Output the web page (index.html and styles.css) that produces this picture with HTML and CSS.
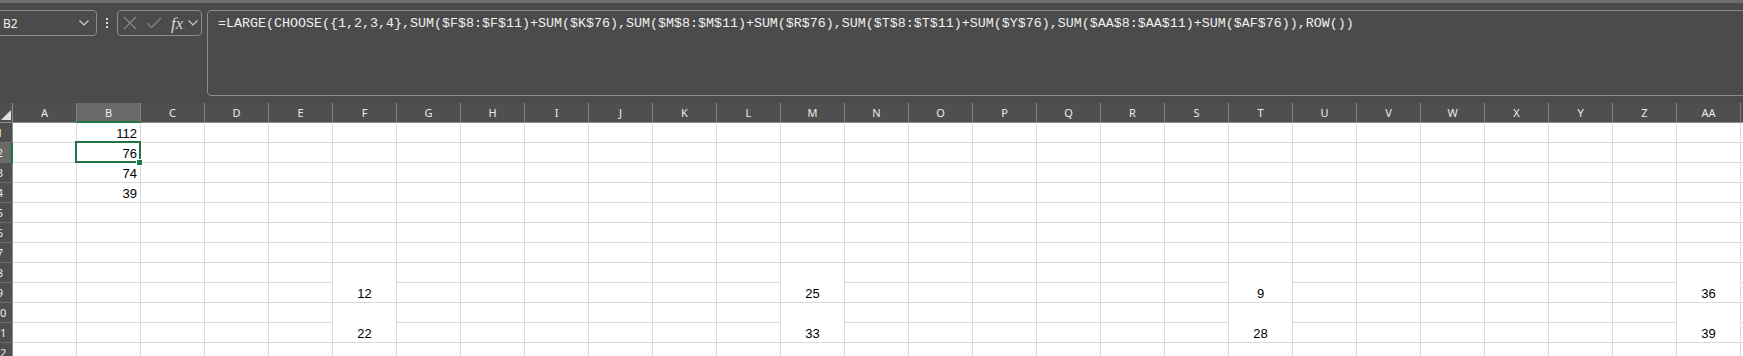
FILE: index.html
```html
<!DOCTYPE html>
<html>
<head>
<meta charset="utf-8">
<link rel="stylesheet" href="styles.css">
</head>
<body>
<div class="app">
  <div class="topbar">
    <div class="namebox">
      <span class="nb-text">B2</span>
      <svg class="chev" width="10" height="6" viewBox="0 0 10 6"><polyline points="0.5,0.5 5,5 9.5,0.5" fill="none" stroke="#d0d0d0" stroke-width="1.2"/></svg>
    </div>
    <div class="dots"><i></i><i></i><i></i></div>
    <div class="fxbox">
      <svg class="ico" width="14" height="14" viewBox="0 0 14 14"><path d="M1 1 L13 13 M13 1 L1 13" stroke="#8a8a8a" stroke-width="1.1" fill="none"/></svg>
      <svg class="ico" width="16" height="12" viewBox="0 0 16 12"><polyline points="1,6 5.5,10.5 15,1" fill="none" stroke="#8a8a8a" stroke-width="1.1"/></svg>
      <span class="fx">fx</span>
      <svg class="chev2" width="10" height="6" viewBox="0 0 10 6"><polyline points="0.5,0.5 5,5 9.5,0.5" fill="none" stroke="#c8c8c8" stroke-width="1.2"/></svg>
    </div>
    <div class="formula">=LARGE(CHOOSE({1,2,3,4},SUM($F$8:$F$11)+SUM($K$76),SUM($M$8:$M$11)+SUM($R$76),SUM($T$8:$T$11)+SUM($Y$76),SUM($AA$8:$AA$11)+SUM($AF$76)),ROW())</div>
  </div>
  <div class="grid">
    <span class="corner"><svg width="10" height="10" viewBox="0 0 10 10"><polygon points="10,0 10,10 0,10" fill="#e0e0e0"/></svg></span>
    <span class="h">A</span><span class="h hs">B</span><span class="h">C</span><span class="h">D</span><span class="h">E</span><span class="h">F</span><span class="h">G</span><span class="h">H</span><span class="h">I</span><span class="h">J</span><span class="h">K</span><span class="h">L</span><span class="h">M</span><span class="h">N</span><span class="h">O</span><span class="h">P</span><span class="h">Q</span><span class="h">R</span><span class="h">S</span><span class="h">T</span><span class="h">U</span><span class="h">V</span><span class="h">W</span><span class="h">X</span><span class="h">Y</span><span class="h">Z</span><span class="h">AA</span><span class="h">AB</span>

    <span class="r"><em>1</em></span><span></span><span class="n">112</span><span></span><span></span><span></span><span></span><span></span><span></span><span></span><span></span><span></span><span></span><span></span><span></span><span></span><span></span><span></span><span></span><span></span><span></span><span></span><span></span><span></span><span></span><span></span><span></span><span></span><span></span>

    <span class="r rs"><em>2</em></span><span></span><span class="n sel">76</span><span></span><span></span><span></span><span></span><span></span><span></span><span></span><span></span><span></span><span></span><span></span><span></span><span></span><span></span><span></span><span></span><span></span><span></span><span></span><span></span><span></span><span></span><span></span><span></span><span></span><span></span>

    <span class="r"><em>3</em></span><span></span><span class="n">74</span><span></span><span></span><span></span><span></span><span></span><span></span><span></span><span></span><span></span><span></span><span></span><span></span><span></span><span></span><span></span><span></span><span></span><span></span><span></span><span></span><span></span><span></span><span></span><span></span><span></span><span></span>

    <span class="r"><em>4</em></span><span></span><span class="n">39</span><span></span><span></span><span></span><span></span><span></span><span></span><span></span><span></span><span></span><span></span><span></span><span></span><span></span><span></span><span></span><span></span><span></span><span></span><span></span><span></span><span></span><span></span><span></span><span></span><span></span><span></span>

    <span class="r"><em>5</em></span><span></span><span></span><span></span><span></span><span></span><span></span><span></span><span></span><span></span><span></span><span></span><span></span><span></span><span></span><span></span><span></span><span></span><span></span><span></span><span></span><span></span><span></span><span></span><span></span><span></span><span></span><span></span><span></span>

    <span class="r"><em>6</em></span><span></span><span></span><span></span><span></span><span></span><span></span><span></span><span></span><span></span><span></span><span></span><span></span><span></span><span></span><span></span><span></span><span></span><span></span><span></span><span></span><span></span><span></span><span></span><span></span><span></span><span></span><span></span><span></span>

    <span class="r"><em>7</em></span><span></span><span></span><span></span><span></span><span></span><span></span><span></span><span></span><span></span><span></span><span></span><span></span><span></span><span></span><span></span><span></span><span></span><span></span><span></span><span></span><span></span><span></span><span></span><span></span><span></span><span></span><span></span><span></span>

    <span class="r"><em>8</em></span><span></span><span></span><span></span><span></span><span></span><span class="m">12</span><span></span><span></span><span></span><span></span><span></span><span></span><span class="m">25</span><span></span><span></span><span></span><span></span><span></span><span></span><span class="m">9</span><span></span><span></span><span></span><span></span><span></span><span></span><span class="m">36</span><span></span>

    <span class="r"><em>9</em></span><span></span><span></span><span></span><span></span><span></span><span></span><span></span><span></span><span></span><span></span><span></span><span></span><span></span><span></span><span></span><span></span><span></span><span></span><span></span><span></span><span></span><span></span><span></span><span></span>

    <span class="r"><em>10</em></span><span></span><span></span><span></span><span></span><span></span><span class="m">22</span><span></span><span></span><span></span><span></span><span></span><span></span><span class="m">33</span><span></span><span></span><span></span><span></span><span></span><span></span><span class="m">28</span><span></span><span></span><span></span><span></span><span></span><span></span><span class="m">39</span><span></span>

    <span class="r"><em>11</em></span><span></span><span></span><span></span><span></span><span></span><span></span><span></span><span></span><span></span><span></span><span></span><span></span><span></span><span></span><span></span><span></span><span></span><span></span><span></span><span></span><span></span><span></span><span></span><span></span>

    <span class="r"><em>12</em></span><span></span><span></span><span></span><span></span><span></span><span></span><span></span><span></span><span></span><span></span><span></span><span></span><span></span><span></span><span></span><span></span><span></span><span></span><span></span><span></span><span></span><span></span><span></span><span></span><span></span><span></span><span></span><span></span>
  </div>
</div>
</body>
</html>
```

FILE: styles.css
```css
html, body {
  margin: 0;
  padding: 0;
  width: 1743px;
  height: 356px;
  overflow: hidden;
  background: #ffffff;
}

.app {
  width: 1743px;
  height: 356px;
  overflow: hidden;
  background: #4b4b4b;
}

.topbar {
  box-sizing: border-box;
  height: 103px;
  border-top: 3px solid #6e6e6e;
  padding-top: 7px;
  display: flex;
  align-items: flex-start;
  background: #4b4b4b;
}

.namebox {
  box-sizing: border-box;
  margin-left: -3px;
  width: 100px;
  height: 26px;
  border: 1px solid #8c8c8c;
  border-radius: 4px;
  display: flex;
  align-items: center;
  justify-content: space-between;
  padding: 0 7px 0 5px;
}

.nb-text {
  font-family: "Noto Sans", "Open Sans", sans-serif;
  font-size: 12px;
  color: #f2f2f2;
}

.chev { display: block; }

.dots {
  width: 20px;
  height: 26px;
  display: flex;
  flex-direction: column;
  align-items: center;
  justify-content: center;
  gap: 2px;
}

.dots i {
  display: block;
  width: 2px;
  height: 2px;
  background: #d8d8d8;
}

.fxbox {
  box-sizing: border-box;
  width: 85px;
  height: 26px;
  border: 1px solid #8c8c8c;
  border-radius: 4px;
  display: flex;
  align-items: center;
  padding-left: 5px;
}

.ico { display: block; margin-right: 9px; }

.fx {
  font-family: "Liberation Serif", serif;
  font-style: italic;
  font-size: 17px;
  color: #d4d4d4;
  margin-left: 0px;
  line-height: 1;
}

.chev2 { display: block; margin-left: 5px; }

.formula {
  box-sizing: border-box;
  margin-left: 5px;
  flex: 1;
  height: 86px;
  margin-right: -10px;
  border: 1px solid #8c8c8c;
  border-radius: 4px;
  padding: 4px 0 0 10px;
  font-family: "Liberation Mono", monospace;
  font-size: 13.33px;
  line-height: 17px;
  color: #f0f0f0;
  white-space: nowrap;
}

.grid {
  display: grid;
  grid-template-columns: 13px repeat(28, 64px);
  grid-auto-rows: 20px;
  background: #ffffff;
}

.grid span {
  box-sizing: border-box;
  border-right: 1px solid #dadada;
  border-bottom: 1px solid #dadada;
  font-family: "Liberation Sans", Arial, sans-serif;
  font-size: 13px;
  line-height: 15px;
  color: #000000;
}

.grid .corner {
  background: #4f4f4f;
  border-right: 1px solid #8c8c8c;
  border-bottom: 1px solid #8c8c8c;
  display: flex;
  align-items: flex-end;
  justify-content: flex-end;
  padding: 0 1px 2px 0;
  overflow: hidden;
}

.corner svg { display: block; }

.grid .h {
  background: #4f4f4f;
  border-right: 1px solid #7e7e7e;
  border-bottom: 1px solid #8c8c8c;
  color: #ececec;
  font-family: "Noto Sans", "Open Sans", sans-serif;
  font-size: 11px;
  display: flex;
  align-items: center;
  justify-content: center;
}

.grid .hs {
  background: #6a6a6a;
  border-bottom: 2px solid #217346;
}

.grid .r {
  background: #4f4f4f;
  border-right: 1px solid #8c8c8c;
  border-bottom: 1px solid #6e6e6e;
  overflow: hidden;
  display: flex;
  align-items: center;
}

.grid .rs {
  background: #6a6a6a;
  border-right: 2px solid #217346;
}

.r em {
  font-style: normal;
  display: block;
  flex: none;
  width: 26px;
  margin-left: -13px;
  text-align: center;
  font-family: "Noto Sans", "Open Sans", sans-serif;
  font-size: 11px;
  color: #ececec;
}

.grid .n {
  display: flex;
  align-items: flex-end;
  justify-content: flex-end;
  padding: 0 3px 1px 0;
}

.grid .m {
  grid-row: span 2;
  display: flex;
  align-items: flex-end;
  justify-content: center;
  padding-bottom: 1px;
}

.grid .sel {
  position: relative;
}

.grid .sel::after {
  content: "";
  position: absolute;
  left: -2px;
  top: -2px;
  right: -1px;
  bottom: -1px;
  border: 2px solid #217346;
  z-index: 2;
}

.grid .sel::before {
  content: "";
  position: absolute;
  right: -3px;
  bottom: -4px;
  width: 5px;
  height: 5px;
  background: #217346;
  border: 1px solid #ffffff;
  z-index: 3;
}
```
